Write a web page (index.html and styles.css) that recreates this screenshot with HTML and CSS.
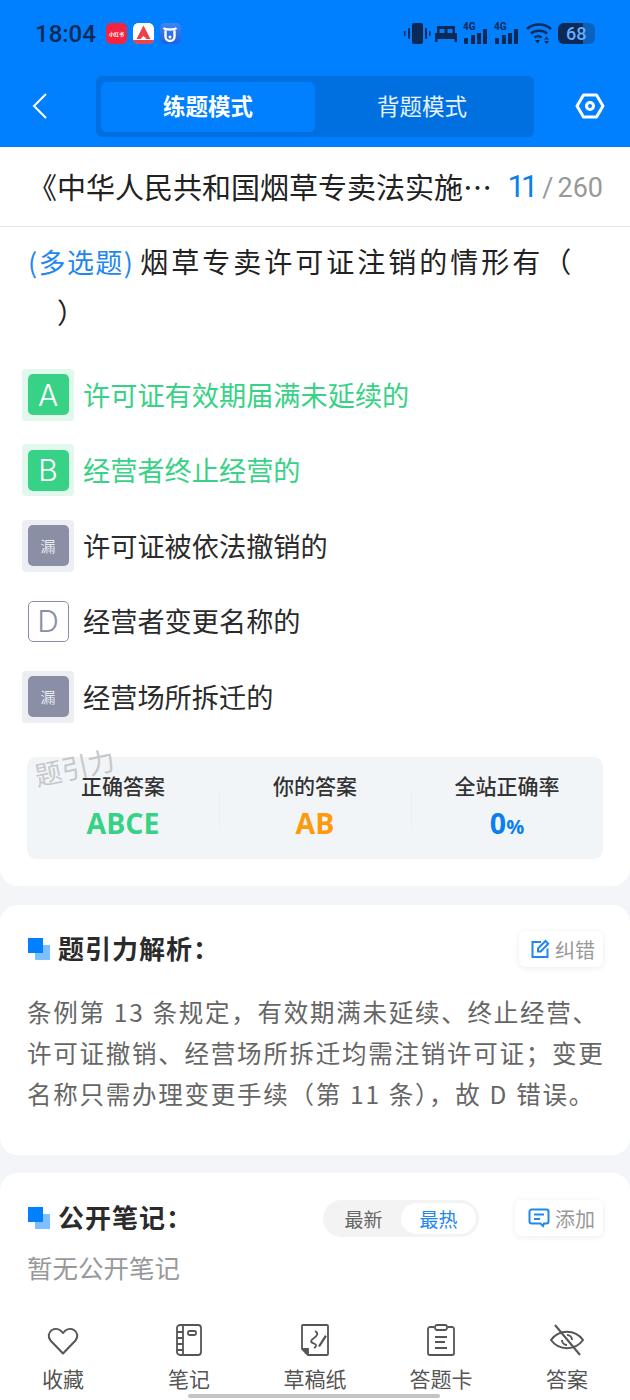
FILE: index.html
```html
<!DOCTYPE html>
<html lang="zh-CN">
  <head>
    <meta charset="UTF-8" />
    <meta name="viewport" content="width=device-width, initial-scale=1.0" />
    <title>练题模式</title>
    <link rel="stylesheet" href="styles.css">
  </head>
  <body>
    <div class="page">
      <header class="top">
        <div class="status">
          <span class="time">18:04</span>
          <span class="app app-red">小红书</span>
          <span class="app app-white">
            <svg width="21" height="21" viewBox="0 0 21 21"><rect width="21" height="21" rx="5" fill="#fff"/><path d="M3 21h15a3 3 0 0 0 3-3v-1H0v1a3 3 0 0 0 3 3z" fill="#e8434f"/><path d="M10.500 2.500 3.500 16h4l3-3 3 3h4z" fill="#ee3f4a"/></svg>
          </span>
          <span class="app app-blue">
            <svg width="20" height="20" viewBox="0 0 20 20"><path d="M3.500 4c2 2 11 2 13 0M5.500 6.500v6a4.500 4.500 0 0 0 9 0v-6" fill="none" stroke="#fff" stroke-width="2.400"/><circle cx="10" cy="13" r="1.500" fill="#fff"/></svg>
          </span>
          <div class="status-right">
            <svg class="ic-vib" width="27" height="21" viewBox="0 0 27 21" fill="#0d2a55"><rect x="8" y="0" width="11" height="21" rx="2"/><rect x="4" y="5" width="2" height="11" rx="1"/><rect x="0" y="8" width="1.500" height="5" rx=".7"/><rect x="21" y="5" width="2" height="11" rx="1"/><rect x="25" y="8" width="1.500" height="5" rx=".7"/></svg>
            <svg class="ic-bed" width="22" height="16" viewBox="0 0 22 16" fill="#0d2a55"><path d="M3 0h16a1 1 0 0 1 1 1v6H2V1a1 1 0 0 1 1-1z"/><rect x="0" y="7" width="22" height="6"/><rect x="4.500" y="3" width="5" height="4" fill="#0080ff"/><rect x="12.500" y="3" width="5" height="4" fill="#0080ff"/><rect x="0" y="13" width="2.500" height="3"/><rect x="19.500" y="13" width="2.500" height="3"/></svg>
            <span class="signal"><i class="net">4G</i><svg width="24" height="21" viewBox="0 0 24 21" fill="#0d2a55"><rect x="1" y="15" width="4" height="6" rx="1"/><rect x="8" y="12" width="4" height="9"/><rect x="14" y="10" width="4" height="11"/><rect x="20" y="6" width="4" height="15"/></svg></span>
            <span class="signal"><i class="net">4G</i><svg width="24" height="21" viewBox="0 0 24 21" fill="#0d2a55"><rect x="1" y="15" width="4" height="6" rx="1"/><rect x="8" y="12" width="4" height="9"/><rect x="14" y="10" width="4" height="11"/><rect x="20" y="6" width="4" height="15"/></svg></span>
            <svg class="ic-wifi" width="26" height="21" viewBox="0 0 26 21" fill="none" stroke="#0d2a55" stroke-width="2.600"><path d="M1 6c6.500-6 17.500-6 24 0M5 10.500c4-3.700 12-3.700 16 0M8.500 14.500c2-1.700 5-1.700 7 0"/><path d="M9 17h5l-2.500 3.500z" fill="#0d2a55" stroke="none"/><path d="M20.500 13.500l2.500 3h-5zM20.500 21l-2.500-3h5z" fill="#0d2a55" stroke="none"/></svg>
            <span class="battery"><span class="battery-fill">68</span></span>
          </div>
        </div>
        <nav class="nav">
          <svg class="back" width="15" height="26" viewBox="0 0 15 26" fill="none" stroke="#fff" stroke-width="2"><path d="M14 1 2 13l12 12"/></svg>
          <div class="mode">
            <div class="mode-item mode-on">练题模式</div>
            <div class="mode-item">背题模式</div>
          </div>
          <svg class="gear" width="30" height="26" viewBox="0 0 30 26" fill="none" stroke="#fff" stroke-width="3"><path d="M8.500 2h13L28 13l-6.500 11h-13L2 13z" stroke-linejoin="round"/><circle cx="15" cy="13" r="3.500"/></svg>
        </nav>
      </header>

      <div class="title-bar">
        <div class="title">《中华人民共和国烟草专卖法实施…</div>
        <div class="count"><b>11</b><em>/</em>260</div>
      </div>

      <section class="card question">
        <p class="stem"><span class="tag">(多选题)</span>烟草专卖许可证注销的情形有（<br><span class="close">）</span></p>
        <ul class="options">
          <li class="opt right"><span class="badge"><span class="letter">A</span></span>许可证有效期届满未延续的</li>
          <li class="opt right"><span class="badge"><span class="letter">B</span></span>经营者终止经营的</li>
          <li class="opt miss"><span class="badge"><span class="letter">漏</span></span>许可证被依法撤销的</li>
          <li class="opt plain"><span class="badge"><span class="letter">D</span></span>经营者变更名称的</li>
          <li class="opt miss"><span class="badge"><span class="letter">漏</span></span>经营场所拆迁的</li>
        </ul>
        <div class="summary">
          <span class="mark">题引力</span>
          <div class="cell"><div class="cell-label">正确答案</div><div class="cell-val green">ABCE</div></div>
          <div class="cell"><div class="cell-label">你的答案</div><div class="cell-val orange">AB</div></div>
          <div class="cell"><div class="cell-label">全站正确率</div><div class="cell-val blue">0<small>%</small></div></div>
        </div>
      </section>

      <section class="card analysis">
        <div class="card-head">
          <span class="squares"></span>
          <h3>题引力解析：</h3>
          <span class="chip">
            <svg width="20" height="20" viewBox="0 0 20 20" fill="none" stroke="#1f87ee" stroke-width="2"><path d="M11 3H2.500v15h15V9.500"/><path d="M8 12.500V9.500L15.500 2l2.700 2.700-7.500 7.800z"/></svg>
            纠错
          </span>
        </div>
        <p class="analysis-text">条例第 13 条规定，有效期满未延续、终止经营、许可证撤销、经营场所拆迁均需注销许可证；变更名称只需办理变更手续（第 11 条），故 D 错误。</p>
      </section>

      <section class="card notes">
        <div class="card-head">
          <span class="squares"></span>
          <h3>公开笔记：</h3>
          <div class="sort"><span>最新</span><span class="sort-on">最热</span></div>
          <span class="chip">
            <svg width="22" height="20" viewBox="0 0 22 20" fill="none" stroke="#1f87ee" stroke-width="2"><path d="M3.500 1.500h15a2 2 0 0 1 2 2v10a2 2 0 0 1-2 2h-2.500l-1 2.500-2.500-2.500h-9a2 2 0 0 1-2-2v-10a2 2 0 0 1 2-2z"/><path d="M6 6.500h10M6 11h6"/></svg>
            添加
          </span>
        </div>
        <p class="empty">暂无公开笔记</p>
      </section>

      <footer class="tabs">
        <div class="tab">
          <svg width="32" height="32" viewBox="0 0 32 32" fill="none" stroke="#555" stroke-width="2"><path d="M16 29.500 3.500 16.500C.5 13 1.500 8 5 6c3.500-2 8-1 11 3 3-4 7.500-5 11-3 3.500 2 4.500 7 1.500 10.500z" stroke-linejoin="round"/></svg>
          <span>收藏</span>
        </div>
        <div class="tab">
          <svg width="26" height="32" viewBox="0 0 26 32" fill="none" stroke="#555" stroke-width="1.800"><rect x="1" y="1" width="24" height="30" rx="3"/><path d="M7 1v30M1 8h6M1 14h6M1 20h6M1 26h6"/><rect x="12" y="7" width="8" height="4" rx="1.500"/></svg>
          <span>笔记</span>
        </div>
        <div class="tab">
          <svg width="28" height="32" viewBox="0 0 28 32" fill="none" stroke="#555" stroke-width="1.800"><path d="M7 31h19a1 1 0 0 0 1-1V2a1 1 0 0 0-1-1H2a1 1 0 0 0-1 1v23z"/><path d="M1 25h6v6" fill="#555"/><path d="M14 7c4 2 2 5-1 7s-5 4 1 6c2 .7 1 3-1 4"/><path d="M17 22l7-11 1.800 1.400-6.800 10.600z" fill="#555" stroke="none"/></svg>
          <span>草稿纸</span>
        </div>
        <div class="tab">
          <svg width="28" height="32" viewBox="0 0 28 32" fill="none" stroke="#555" stroke-width="1.800"><path d="M7 3H3a2 2 0 0 0-2 2v24a2 2 0 0 0 2 2h22a2 2 0 0 0 2-2V5a2 2 0 0 0-2-2h-4"/><rect x="8" y="1" width="12" height="5" rx="2"/><path d="M8 13h12M8 18h10M8 24h12"/></svg>
          <span>答题卡</span>
        </div>
        <div class="tab">
          <svg width="36" height="32" viewBox="0 0 36 32" fill="none" stroke="#555" stroke-width="2"><path d="M2 16c8-11 24-11 32 0-8 11-24 11-32 0z"/><path d="M18 11a5 5 0 0 1 5 5M13 16a5 5 0 0 0 5 5"/><path d="M6 1l25 30"/></svg>
          <span>答案</span>
        </div>
        <div class="home-bar"></div>
      </footer>
    </div>
  </body>
</html>
```

FILE: styles.css
```css
html,
body {
  margin: 0;
  padding: 0;
  font-family: "Noto Sans CJK SC", "Noto Sans", sans-serif;
  background-color: #f3f5f8;
}

.page {
  position: relative;
  width: 630px;
  height: 1400px;
  overflow: hidden;
  display: flex;
  flex-direction: column;
}

.top {
  background: #0080ff;
  height: 147px;
  flex: none;
}

.status {
  display: flex;
  align-items: center;
  height: 67px;
  padding: 0 35px 0 35px;
  box-sizing: border-box;
  color: #0d2a55;
}

.time {
  font-family: "Roboto", sans-serif;
  font-size: 24px;
  font-weight: 500;
  margin-right: 10px;
}

.app {
  width: 21px;
  height: 21px;
  border-radius: 5px;
  margin-right: 6px;
  display: flex;
  align-items: center;
  justify-content: center;
  overflow: hidden;
}

.app-red {
  background: #f2243f;
  color: #fff;
  font-size: 5px;
  font-weight: 700;
  white-space: nowrap;
}

.app-blue {
  background: linear-gradient(#3f86f2, #1d62dd);
}

.status-right {
  margin-left: auto;
  display: flex;
  align-items: center;
}

.ic-vib {
  margin-right: 4px;
}

.ic-bed {
  margin-right: 6px;
}

.ic-wifi {
  margin: 0 6px 0 7px;
}

.signal {
  position: relative;
  display: block;
  width: 24px;
  height: 21px;
  margin-right: 7px;
}

.signal + .ic-wifi {
  margin-left: 1px;
}

.signal svg {
  display: block;
}

.net {
  position: absolute;
  left: 0;
  top: -2px;
  font-family: "Roboto", sans-serif;
  font-size: 10px;
  font-weight: 700;
  font-style: normal;
  line-height: 12px;
}

.battery {
  width: 37px;
  height: 21px;
  border-radius: 6px;
  background: #0b62bd;
  overflow: hidden;
  display: block;
}

.battery-fill {
  display: block;
  width: 17px;
  height: 21px;
  background: #0d2a55;
  color: #66aefc;
  font-family: "Roboto", sans-serif;
  font-size: 18px;
  font-weight: 500;
  line-height: 21px;
  padding-left: 8px;
  white-space: nowrap;
}

.nav {
  display: flex;
  align-items: center;
  height: 80px;
  padding: 0 25px 2px 32px;
  box-sizing: border-box;
}

.back {
  flex: none;
}

.mode {
  display: flex;
  width: 438px;
  height: 61px;
  margin-left: 49px;
  padding: 6px 5px 5px;
  box-sizing: border-box;
  background: #0070e0;
  border-radius: 6px;
}

.mode-item {
  flex: 1;
  display: flex;
  align-items: center;
  justify-content: center;
  padding-bottom: 4px;
  box-sizing: border-box;
  color: #e6f2ff;
  font-size: 22.500px;
}

.mode-on {
  background: #0080ff;
  border-radius: 6px;
  color: #fff;
  font-weight: 700;
}

.gear {
  margin-left: auto;
}

.title-bar {
  flex: none;
  height: 80px;
  box-sizing: border-box;
  display: flex;
  align-items: center;
  justify-content: space-between;
  padding: 0 27px 0 28px;
  background: #fff;
  border-bottom: 1px solid #e4e4e4;
}

.title {
  font-size: 29px;
  margin-top: -2px;
  color: #222;
  white-space: nowrap;
}

.count {
  font-family: "Roboto", sans-serif;
  font-size: 27px;
  color: #999;
  white-space: nowrap;
}

.count b {
  font-weight: 400;
  font-size: 31px;
  letter-spacing: -4px;
  color: #0a7fee;
}

.count em {
  font-style: normal;
  margin: 0 4px 0 8px;
}

.card {
  background: #fff;
  border-radius: 18px;
  flex: none;
}

.question {
  height: 659px;
  border-radius: 0 0 18px 18px;
  padding: 0 27px;
  box-sizing: border-box;
  margin-bottom: 19px;
}

.stem {
  margin: 0;
  font-size: 28px;
  line-height: 51px;
  padding-top: 9px;
  color: #222;
  letter-spacing: 3px;
}

.tag {
  font-size: 27px;
  color: #1f87ee;
  letter-spacing: 1.400px;
  margin: 0 6px 0 1px;
}

.close {
  margin-left: 30px;
}

.options {
  list-style: none;
  margin: 29px 0 0;
  padding: 0;
}

.opt {
  display: flex;
  align-items: center;
  height: 53px;
  margin: 0 0 22.500px -5px;
  font-size: 27.200px;
  color: #2b2b2b;
}

.badge {
  width: 52px;
  height: 52px;
  border-radius: 4px;
  margin: 2px 9px 0 0;
  display: flex;
  align-items: center;
  justify-content: center;
  flex: none;
}

.letter {
  width: 41px;
  height: 41px;
  border-radius: 5px;
  box-sizing: border-box;
  display: flex;
  align-items: center;
  justify-content: center;
  font-family: "Inter", sans-serif;
  font-size: 30px;
  font-weight: 300;
}

.right {
  color: #38d286;
}

.right .badge {
  background: #e2f8ec;
}

.right .letter {
  background: #38d286;
  color: #fff;
}

.miss .badge {
  background: #eceef4;
}

.miss .letter {
  background: #8b8fa6;
  color: #fff;
  font-family: "Noto Sans CJK SC", sans-serif;
  font-size: 15px;
}

.plain .letter {
  border: 1.500px solid #8b8fa6;
  color: #8b8fa6;
}

.summary {
  position: relative;
  display: flex;
  height: 102px;
  margin-top: 35px;
  background: #f2f5f8;
  border-radius: 9px;
}

.mark {
  position: absolute;
  left: 7px;
  top: -10px;
  font-size: 27px;
  color: #c6c8cb;
  transform: rotate(-12deg);
  white-space: nowrap;
}

.cell {
  flex: 1;
  text-align: center;
  padding-top: 13px;
  position: relative;
}

.cell + .cell::before {
  content: "";
  position: absolute;
  left: 0;
  top: 35px;
  height: 34px;
  border-left: 1px solid #eaedf0;
}

.cell-label {
  font-size: 21px;
  font-weight: 500;
  line-height: 30px;
  color: #333;
}

.cell-val {
  font-family: "Open Sans", sans-serif;
  font-size: 28.500px;
  font-weight: 700;
  line-height: 46px;
}

.cell-val small {
  font-size: 20px;
}

.green {
  color: #38d286;
}

.orange {
  color: #ff9a0d;
}

.blue {
  color: #0a7fee;
}

.analysis {
  height: 250px;
  padding: 24px 24px 0 27px;
  box-sizing: border-box;
  margin-bottom: 18px;
}

.analysis .card-head {
  margin-right: 3px;
}

.card-head {
  display: flex;
  align-items: center;
  height: 40px;
}

.squares {
  width: 22px;
  height: 22px;
  margin: 0 8px 0 1px;
  flex: none;
  background: linear-gradient(#0080ff, #0080ff) 0 0 / 15px 15px no-repeat,
    linear-gradient(#7dbfff, #7dbfff) 7px 7px / 15px 15px no-repeat;
}

.card-head h3 {
  margin: -4px 0 0;
  font-size: 26px;
  font-weight: 700;
  color: #2b2b2b;
  letter-spacing: 1px;
}

.chip {
  margin-left: auto;
  display: flex;
  align-items: center;
  gap: 5px;
  height: 36px;
  padding: 0 8px 0 11px;
  border-radius: 6px;
  background: #fff;
  color: #999;
  font-size: 20px;
  box-shadow: 0 1px 6px rgba(0, 0, 0, 0.08);
}

.analysis-text {
  margin: 22px 0 0;
  font-size: 24.500px;
  line-height: 41px;
  color: #666;
  letter-spacing: 1.750px;
  word-spacing: 0.800px;
}

.notes {
  height: 160px;
  padding: 25px 27px 0;
  box-sizing: border-box;
}

.sort {
  display: flex;
  align-items: center;
  margin-left: auto;
  height: 37px;
  width: 156px;
  border-radius: 19px;
  background: #f3f3f3;
  font-size: 19px;
  color: #666;
  padding: 3px;
  box-sizing: border-box;
}

.sort span {
  flex: 1;
  height: 31px;
  line-height: 31px;
  text-align: center;
  border-radius: 16px;
}

.sort-on {
  background: #fff;
  color: #1f87ee;
}

.notes .chip {
  margin-left: 36px;
  padding-left: 13px;
}

.empty {
  margin: 10px 0 0;
  font-size: 25.500px;
  color: #999;
}

.tabs {
  position: absolute;
  left: 0;
  right: 0;
  bottom: 0;
  height: 95px;
  display: flex;
  justify-content: space-around;
  padding: 19px 0 0;
  box-sizing: border-box;
  background: #fff;
}

.tab {
  width: 126px;
  display: flex;
  flex-direction: column;
  align-items: center;
  color: #555;
  font-size: 21px;
}

.tab svg {
  height: 32px;
}

.tab span {
  margin-top: 7px;
  line-height: 30px;
}

.home-bar {
  position: absolute;
  left: 188px;
  bottom: 2px;
  width: 252px;
  height: 4px;
  border-radius: 3px;
  background: #c4c4c4;
}
```
